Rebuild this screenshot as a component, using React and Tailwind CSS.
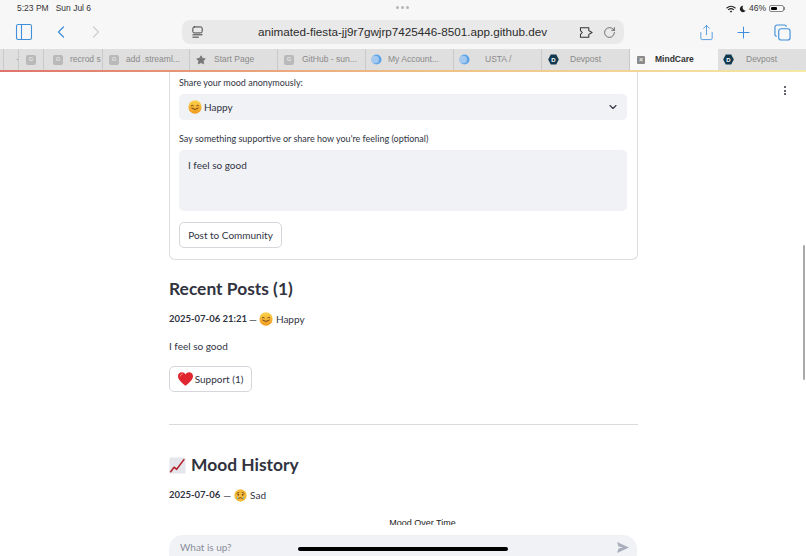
import React from "react";
import { ChevronLeft, ChevronRight, ChevronDown, Plus, RotateCw, Share, PanelLeft, Star } from "lucide-react";

const FONT = "[font-family:'Lato','Noto_Sans',sans-serif]";
const CHROME = "[font-family:'Liberation_Sans',sans-serif]";

const Smile = ({ size = 14 }) => (
  <svg width={size} height={size} viewBox="0 0 20 20" className="shrink-0">
    <defs>
      <linearGradient id="smileFace" x1="0" y1="0" x2="0" y2="1">
        <stop offset="0" stopColor="#fbd34e" />
        <stop offset="1" stopColor="#f09a1e" />
      </linearGradient>
    </defs>
    <circle cx="10" cy="10" r="9.5" fill="url(#smileFace)" />
    <path d="M4.6 8.2q1.4-1.6 2.9 0M12.5 8.2q1.5-1.6 2.9 0" fill="none" stroke="#5b3410" strokeWidth="1.2" strokeLinecap="round" />
    <path d="M5.5 11.8q4.5 3.8 9 0" fill="none" stroke="#5b3410" strokeWidth="1.2" strokeLinecap="round" />
    <ellipse cx="4.6" cy="11.3" rx="1.6" ry="1" fill="#f27f4a" opacity="0.5" />
    <ellipse cx="15.4" cy="11.3" rx="1.6" ry="1" fill="#f27f4a" opacity="0.5" />
  </svg>
);

const SadFace = () => (
  <svg width="13" height="13" viewBox="0 0 20 20" className="shrink-0">
    <circle cx="10" cy="10" r="9.5" fill="#f5b93a" />
    <path d="M4.5 6.5l3-1M15.5 6.500l-3-1" stroke="#5b3410" strokeWidth="1.1" strokeLinecap="round" />
    <circle cx="6.5" cy="9" r="1.2" fill="#4a2a0c" />
    <circle cx="13.5" cy="9" r="1.2" fill="#4a2a0c" />
    <path d="M7 14.5q3-2.8 6 0" fill="none" stroke="#5b3410" strokeWidth="1.2" strokeLinecap="round" />
    <path d="M5.500 11q-2 3.500 0 4.500q2-1 0-4.500zM14.500 11q-2 3.500 0 4.500q2-1 0-4.500z" fill="#5fb6e8" />
  </svg>
);

const Heart = () => (
  <svg width="15" height="14" viewBox="0 0 20 18" className="shrink-0">
    <path d="M10 18C4 13 0 9.5 0 5.3 0 2.2 2.4 0 5.2 0 7.2 0 9 1 10 3c1-2 2.8-3 4.8-3C17.6 0 20 2.2 20 5.300 20 9.500 16 13 10 18z" fill="#e0262e" />
    <path d="M3 5q.5-2.500 3-2.800" fill="none" stroke="#f58b8b" strokeWidth="1.200" strokeLinecap="round" />
  </svg>
);

const ChartEmoji = () => (
  <svg width="17" height="17" viewBox="0 0 20 20" className="shrink-0">
    <rect x="0.500" y="0.500" width="19" height="19" rx="1.500" fill="#e4e6ec" />
    <path d="M1.500 18l4.500-6 3 2.500L18 2.500" fill="none" stroke="#b3202c" strokeWidth="1.800" strokeLinejoin="round" />
  </svg>
);

const GFav = () => (
  <span className="flex h-[10px] w-[10px] shrink-0 items-center justify-center rounded-[2px] bg-[#b9b9b9] text-[6px] font-bold text-[#e4e4e4]">G</span>
);

const MoonFav = () => (
  <svg width="11" height="11" viewBox="0 0 12 12" className="shrink-0">
    <circle cx="6" cy="6" r="5.500" fill="#5fa5e6" />
    <circle cx="4.500" cy="6" r="4.200" fill="#a5c9ee" />
  </svg>
);

const DevFav = () => (
  <svg width="11" height="11" viewBox="0 0 12 12" className="shrink-0">
    <path d="M3 .5h6L11.800 6 9 11.500H3L.2 6z" fill="#12394f" />
    <text x="6" y="8.400" textAnchor="middle" fontSize="6.500" fontWeight="700" fill="#fff">D</text>
  </svg>
);

const tabs = [
  { w: "w-[4px]" },
  { w: "w-[15px]", dot: true },
  { w: "w-[25px]", icon: <GFav />, pad: "pl-[7px]" },
  { w: "w-[59px]", icon: <GFav />, label: "recrod s", pad: "pl-[9px]", gap: "gap-[7px]" },
  { w: "w-[87px]", icon: <GFav />, label: "add .streaml...", pad: "pl-[6px]", gap: "gap-[7px]" },
  { w: "w-[88px]", icon: <Star size={10} fill="#777" stroke="#777" className="shrink-0" />, label: "Start Page", pad: "pl-[6px]", gap: "gap-[8px]" },
  { w: "w-[88px]", icon: <GFav />, label: "GitHub - sun...", pad: "pl-[6px]", gap: "gap-[8px]" },
  { w: "w-[88px]", icon: <MoonFav />, label: "My Account...", pad: "pl-[5px]", gap: "gap-[6px]" },
  { w: "w-[88px]", icon: <MoonFav />, label: "USTA /", pad: "pl-[5px]", gap: "gap-[15px]" },
  { w: "w-[88px]", icon: <DevFav />, label: "Devpost", pad: "pl-[6px]", gap: "gap-[11px]" },
];

const Tab = ({ t }) => (
  <div className={`flex h-full shrink-0 items-center overflow-hidden whitespace-nowrap border-r border-[#c9c9c9] text-[8.500px] text-[#8a8a8a] ${t.w} ${t.pad || ""} ${t.gap || ""}`}>
    {t.dot && <span className="ml-[12px] text-[8px] leading-none text-[#555]">·</span>}
    {t.icon}
    {t.label && <span>{t.label}</span>}
  </div>
);

const StatusBar = () => (
  <div className="relative flex h-[15px] items-end justify-between pl-[17px] pr-[21px] text-[8.500px] text-[#333]">
    <div className="flex gap-[7px]">
      <span>5:23 PM</span>
      <span>Sun Jul 6</span>
    </div>
    <div className="absolute left-[396px] top-[6px] flex gap-[2px]">
      <span className="h-[3px] w-[3px] rounded-full bg-[#b5b5b5]" />
      <span className="h-[3px] w-[3px] rounded-full bg-[#b5b5b5]" />
      <span className="h-[3px] w-[3px] rounded-full bg-[#b5b5b5]" />
    </div>
    <div className="flex items-center gap-[3px]">
      <svg width="10" height="8" viewBox="0 0 12 9" fill="none" stroke="#222" strokeWidth="1.300" strokeLinecap="round">
        <path d="M1 3.300q5-4.300 10 0M3 5.300q3-2.500 6 0" />
        <path d="M6 9L4.500 7q1.500-1 3 0z" fill="#222" stroke="none" />
      </svg>
      <svg width="7" height="8" viewBox="0 0 10 10">
        <path d="M6 .5a4.500 4.500 0 1 0 3.500 7A4.500 4.500 0 0 1 6 .5z" fill="#222" />
      </svg>
      <span>46%</span>
      <div className="flex items-center">
        <div className="h-[7px] w-[15px] rounded-[2px] border border-[#888] p-[1px]">
          <div className="h-full w-[6px] rounded-[1px] bg-black" />
        </div>
        <div className="h-[3px] w-[1px] bg-[#888]" />
      </div>
    </div>
  </div>
);

const Toolbar = () => (
  <div className="flex h-[34px] items-center">
    <div className="flex w-[182px] shrink-0 items-center pl-[14px]">
      <PanelLeft size={20} strokeWidth={1.300} className="text-[#3f8fdc]" />
      <ChevronLeft size={20} strokeWidth={1.500} className="ml-[17px] text-[#3f8fdc]" />
      <ChevronRight size={20} strokeWidth={1.500} className="ml-[15px] text-[#cfcfcf]" />
    </div>
    <div className="flex h-[24px] w-[442px] shrink-0 items-center rounded-[8px] bg-[#e9e9e9] pl-[9px] pr-[5px]">
      <svg width="13" height="13" viewBox="0 0 14 14" fill="none" stroke="#333" strokeWidth="1" strokeLinecap="round">
        <rect x="2" y="1" width="10" height="6.500" rx="1.500" />
        <path d="M2 9.500h10M2 12h6" />
      </svg>
      <span className="ml-[54px] whitespace-nowrap text-[11.700px] text-[#2c2c2c]">animated-fiesta-jj9r7gwjrp7425446-8501.app.github.dev</span>
      <svg width="15" height="13" viewBox="0 0 16 14" fill="none" stroke="#333" strokeWidth="1.100" strokeLinejoin="round" className="ml-auto">
        <path d="M1.500 2h9v3l3.500 2-3.500 2v3h-9V9l2-2-2-2z" />
      </svg>
      <RotateCw size={13} strokeWidth={1.200} className="ml-[9px] mr-[3px] text-[#333]" />
    </div>
    <Share size={17} strokeWidth={1.200} className="ml-[74px] text-[#3f8fdc]" />
    <Plus size={19} strokeWidth={1.300} className="ml-[19px] text-[#3f8fdc]" />
    <svg width="17" height="17" viewBox="0 0 18 18" fill="none" stroke="#3f8fdc" strokeWidth="1.200" className="ml-[21px]">
      <rect x="5" y="5" width="12" height="12" rx="2.500" />
      <path d="M3 13a2 2 0 0 1-2-2V3.500A2.500 2.500 0 0 1 3.500 1H11a2 2 0 0 1 2 2" />
    </svg>
  </div>
);

const TabStrip = () => (
  <div className="flex h-[21px] bg-[#dfdfdf]">
    {tabs.map((t, i) => (
      <Tab key={i} t={t} />
    ))}
    <div className="flex h-full w-[88px] shrink-0 items-center gap-[10px] whitespace-nowrap bg-[#f8f8f8] pl-[7px] text-[8.500px] font-bold text-[#333]">
      <span className="flex h-[8px] w-[8px] items-center justify-center rounded-[1px] bg-[#8a8a8a] text-[7px] leading-none text-[#eee]">×</span>
      <span>MindCare</span>
    </div>
    <div className="flex h-full flex-1 items-center gap-[12px] whitespace-nowrap pl-[5px] text-[8.500px] text-[#8a8a8a]">
      <DevFav />
      <span>Devpost</span>
    </div>
  </div>
);

const Card = () => (
  <div className="rounded-b-[6px] border-x border-b border-[#dcdde1] pb-[11px] pl-[9px] pr-[10px] pt-[5px]">
    <p className="text-[9px] leading-[12px] text-[#31333f]">Share your mood anonymously:</p>
    <div className="mt-[5px] flex h-[26px] items-center rounded-[5px] bg-[#f0f2f6] pl-[9px] pr-[8px] text-[10px] text-[#31333f]">
      <Smile />
      <span className="ml-[2px]">Happy</span>
      <ChevronDown size={12} strokeWidth={2.200} className="ml-auto text-[#31333f]" />
    </div>
    <p className="mt-[13px] text-[9px] leading-[12px] text-[#31333f]">Say something supportive or share how you're feeling (optional)</p>
    <div className="mt-[5px] h-[61px] rounded-[5px] bg-[#f0f2f6] px-[9px] py-[8px] text-[10px] leading-[14px] text-[#31333f]">I feel so good</div>
    <button className="mt-[11px] block h-[26px] w-[103px] rounded-[5px] border border-[#d5d6db] bg-white text-[10px] text-[#31333f]">Post to Community</button>
  </div>
);

const Feed = () => (
  <div className="text-[#31333f]">
    <h2 className="mt-[16px] text-[17.400px] font-bold leading-[26px]">Recent Posts (1)</h2>
    <div className="mt-[9px] flex h-[16px] items-center text-[10px]">
      <span className="text-[9.500px] font-bold">2025-07-06 21:21</span>
      <span className="mx-[2px]">—</span>
      <Smile />
      <span className="ml-[3px]">Happy</span>
    </div>
    <p className="mt-[12px] text-[10px] leading-[14px]">I feel so good</p>
    <button className="mt-[13px] flex h-[26px] w-[83px] items-center justify-center gap-[2px] rounded-[5px] border border-[#d5d6db] bg-white text-[10px]">
      <Heart />
      <span>Support (1)</span>
    </button>
    <hr className="mt-[32px] border-[#d9dade]" />
    <h2 className="mt-[27px] flex h-[26px] items-center gap-[5px] text-[17.400px] font-bold">
      <ChartEmoji />
      <span>Mood History</span>
    </h2>
    <div className="mt-[9px] flex h-[16px] items-center text-[10px]">
      <span className="text-[9.500px] font-bold">2025-07-06</span>
      <span className="mx-[3px]">—</span>
      <SadFace />
      <span className="ml-[3px]">Sad</span>
    </div>
    <p className={`mt-[14px] pl-[38px] text-center text-[9px] leading-[12px] text-[#222] ${CHROME}`}>Mood Over Time</p>
  </div>
);

const ChatBar = () => (
  <div className="absolute bottom-0 left-0 right-0 h-[31px] bg-white pl-[169px] pt-[10px]">
    <div className="flex h-[24px] w-[468px] items-center rounded-t-[14px] bg-[#f0f2f6] pl-[11px] pr-[8px] text-[10px] text-[#8b8e99]">
      <span>What is up?</span>
      <svg width="12" height="11" viewBox="0 0 12 11" className="ml-auto">
        <path d="M0 0l12 5.500L0 11l1.500-4.500 4.500-1-4.500-1z" fill="#a9adbb" />
      </svg>
    </div>
  </div>
);

export default function App() {
  return (
    <div className={`relative h-[556px] w-[806px] overflow-hidden bg-white ${FONT}`}>
      <div className={`bg-[#f7f7f7] ${CHROME}`}>
        <StatusBar />
        <Toolbar />
        <TabStrip />
        <div className="h-[2px] bg-gradient-to-r from-[#e0736b] via-[#eebd84] to-[#f4e9a6]" />
      </div>
      <main className="ml-[169px] w-[469px]">
        <Card />
        <Feed />
      </main>
      <button className="absolute right-[20px] top-[86px] flex flex-col gap-[1.500px]">
        <span className="h-[2px] w-[2px] rounded-full bg-[#31333f]" />
        <span className="h-[2px] w-[2px] rounded-full bg-[#31333f]" />
        <span className="h-[2px] w-[2px] rounded-full bg-[#31333f]" />
      </button>
      <div className="absolute right-[1px] top-[245px] h-[135px] w-[2px] rounded-full bg-[#aaaaaa]" />
      <ChatBar />
      <div className="absolute bottom-[5px] left-[298px] h-[4px] w-[210px] rounded-full bg-black" />
    </div>
  );
}
